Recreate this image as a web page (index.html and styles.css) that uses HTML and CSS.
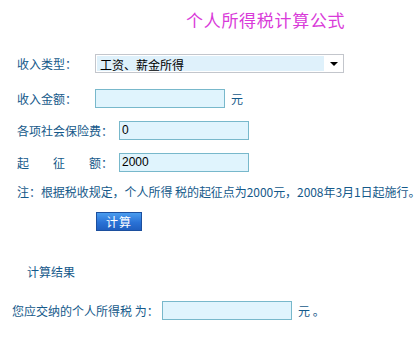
FILE: index.html
```html
<!DOCTYPE html>
<html lang="zh-CN">
  <head>
    <meta charset="utf-8" />
    <title>个人所得税计算公式</title>
    <link rel="stylesheet" href="styles.css">
  </head>
  <body>
    <div class="page">
      <h1 class="title">个人所得税计算公式</h1>

      <div class="form-row">
        <label class="label" for="incomeType">收入类型：</label>
        <div class="select-wrap">
          <select id="incomeType" class="type-select">
            <option>工资、薪金所得</option>
            <option>个体工商户生产、经营所得</option>
            <option>劳务报酬所得</option>
          </select>
        </div>
      </div>

      <div class="form-row">
        <label class="label" for="income">收入金额：</label>
        <input type="text" id="income" class="field" />
        <span class="unit">元</span>
      </div>

      <div class="form-row">
        <label class="label label-wide" for="insurance">各项社会保险费：</label>
        <input type="text" id="insurance" class="field" value="0" />
      </div>

      <div class="form-row">
        <label class="label label-wide" for="threshold">起　　征　　额：</label>
        <input type="text" id="threshold" class="field" value="2000" />
      </div>

      <p class="note">注：根据税收规定，个人所得 税的起征点为2000元，2008年3月1日起施行。</p>

      <div class="btn-row">
        <button class="btn-calc" onclick="calcTax()">计算</button>
      </div>

      <h2 class="result-title">计算结果</h2>

      <div class="form-row result-row">
        <label class="label-result" for="result">您应交纳的个人所得税 为：</label>
        <input type="text" id="result" class="field" />
        <span class="unit">元 。</span>
      </div>
    </div>

    <script>
      function calcTax() {
        const income = parseFloat(document.getElementById('income').value) || 0;
        const insurance = parseFloat(document.getElementById('insurance').value) || 0;
        const threshold = parseFloat(document.getElementById('threshold').value) || 0;
        const taxable = income - insurance - threshold;

        // 2008 wage brackets
        const brackets = [
          [500, 0.05, 0], [2000, 0.1, 25], [5000, 0.15, 125], [20000, 0.2, 375],
          [40000, 0.25, 1375], [60000, 0.3, 3375], [80000, 0.35, 6375],
          [100000, 0.4, 10375], [Infinity, 0.45, 15375]
        ];

        let tax = 0;
        if (taxable > 0) {
          const b = brackets.find(item => taxable <= item[0]);
          tax = taxable * b[1] - b[2];
        }
        document.getElementById('result').value = tax.toFixed(2);
      }
    </script>
  </body>
</html>
```

FILE: styles.css
```css
* {
  margin: 0;
  padding: 0;
  box-sizing: border-box;
}

body {
  font-family: "Noto Sans CJK SC", "DejaVu Sans", sans-serif;
  font-size: 12px;
  color: #15598a;
  background: #ffffff;
}

.page {
  padding-left: 17px;
}

.title {
  height: 47px;
  padding: 9px 0 0 169px;
  font-size: 17px;
  font-weight: normal;
  letter-spacing: 0.7px;
  line-height: 22px;
  color: #d93ad9;
}

.form-row {
  display: flex;
  align-items: center;
  height: 32px;
}

.form-row:first-of-type {
  margin-bottom: 3px;
}

.label {
  width: 78px;
  flex-shrink: 0;
}

.label-wide {
  width: 102px;
}

.select-wrap {
  position: relative;
  width: 249px;
  height: 19px;
  border: 1px solid #c3c6cc;
  background: #ffffff;
}

.select-wrap::after {
  content: "";
  position: absolute;
  right: 5px;
  top: 7px;
  border-left: 4px solid transparent;
  border-right: 4px solid transparent;
  border-top: 4px solid #000000;
  pointer-events: none;
}

.type-select {
  appearance: none;
  -webkit-appearance: none;
  width: 100%;
  height: 100%;
  border: none;
  outline: none;
  font-family: inherit;
  font-size: 12px;
  color: #000000;
  background: linear-gradient(to right, #dff1fb 0, #dff1fb 228px, #ffffff 228px);
  background-clip: content-box;
  background-origin: border-box;
  padding: 1px 0 1px 1px;
  text-indent: 3px;
}

.field {
  width: 130px;
  height: 19px;
  padding: 0 2px;
  border: 1px solid #78b8cb;
  background: #e0f4fd;
  font-family: "Liberation Sans", Arial, sans-serif;
  font-size: 12px;
  color: #000000;
  outline: none;
}

.unit {
  margin-left: 6px;
}

.note {
  height: 28px;
  line-height: 28px;
  white-space: nowrap;
  letter-spacing: -0.05px;
}

.btn-row {
  height: 30px;
  display: flex;
  align-items: center;
  padding-left: 79px;
}

.btn-calc {
  width: 46px;
  height: 19px;
  border: 1px solid #1c4f9e;
  background: linear-gradient(#4a9cef, #2a72d6 55%, #1f5fc0);
  color: #ffffff;
  font-family: inherit;
  font-size: 12px;
  letter-spacing: 1px;
  cursor: pointer;
}

.result-title {
  margin-top: 20px;
  height: 32px;
  line-height: 32px;
  padding-left: 10px;
  font-size: 12px;
  font-weight: normal;
}

.result-row {
  margin: 6px 0 0 -5px;
}

.label-result {
  width: 150px;
  flex-shrink: 0;
}
```
